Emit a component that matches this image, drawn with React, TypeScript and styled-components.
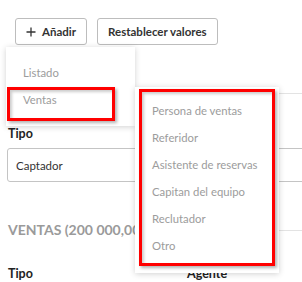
import * as React from 'react';
import styled, { createGlobalStyle } from 'styled-components';

const GlobalStyle = createGlobalStyle`
  html, body {
    margin: 0;
    padding: 0;
    background: #fff;
    font-family: Lato, "Open Sans", sans-serif;
    color: #333;
    overflow: hidden;
  }
`;

const Page = styled.div`
  position: relative;
  width: 302px;
  height: 282px;
  overflow: hidden;
  padding: 18px 0 0 7px;
  box-sizing: border-box;
`;

const Toolbar = styled.div`
  display: flex;
  gap: 10px;
  padding-left: 8px;
`;

const Button = styled.button`
  display: flex;
  align-items: center;
  gap: 6px;
  height: 27px;
  padding: 0 10px;
  background: #fff;
  border: 1px solid #bdbdbd;
  border-radius: 3px;
  font-family: Lato, sans-serif;
  font-size: 11.5px;
  font-weight: 700;
  color: #333;
`;

const Divider = styled.div<{ $top: number }>`
  margin-top: ${({ $top }) => $top}px;
  height: 1px;
  background: #e3e3e3;
`;

const Spacer = styled.div<{ $h: number }>`
  height: ${({ $h }) => $h}px;
`;

const Label = styled.div`
  font-size: 12.5px;
  line-height: 15px;
  font-weight: 700;
  color: #222;
  margin-left: 1px;
`;

const Input = styled.div`
  margin-top: 7px;
  height: 34px;
  width: 320px;
  box-sizing: border-box;
  border: 1px solid #c4c4c4;
  border-radius: 3px;
  display: flex;
  align-items: center;
  padding-left: 8px;
  font-size: 11.5px;
  color: #333;
`;

const SectionTitle = styled.div`
  display: flex;
  align-items: center;
  gap: 8px;
  margin-top: 39px;
  font-size: 14px;
  line-height: 18px;
  font-weight: 700;
  color: #9a9a9a;
  white-space: nowrap;
  margin-left: 1px;
  &::after {
    content: '';
    flex: 1;
    height: 1px;
    background: #e3e3e3;
  }
`;

const Columns = styled.div`
  display: grid;
  grid-template-columns: 179px 1fr;
  margin-top: 27px;
`;

const Menu = styled.ul<{ $left: number; $top: number; $width: number }>`
  position: absolute;
  left: ${({ $left }) => $left}px;
  top: ${({ $top }) => $top}px;
  width: ${({ $width }) => $width}px;
  margin: 0;
  list-style: none;
  background: #fff;
  box-shadow: 0 1px 6px rgba(0, 0, 0, 0.18);
  box-sizing: border-box;
`;

const MainMenu = styled(Menu)`
  padding: 12px 0 13px;
`;

const SubMenu = styled(Menu)`
  padding: 10px 0 14px;
`;

const Item = styled.li`
  height: 27px;
  line-height: 27px;
  padding-left: 17px;
  font-size: 11.3px;
  color: #9c9c9c;
  white-space: nowrap;
`;

const Highlight = styled.div<{ $left: number; $top: number; $w: number; $h: number }>`
  position: absolute;
  left: ${({ $left }) => $left}px;
  top: ${({ $top }) => $top}px;
  width: ${({ $w }) => $w}px;
  height: ${({ $h }) => $h}px;
  border: 3px solid #ff0000;
  box-sizing: border-box;
  box-shadow: 2px 2px 3px rgba(0, 0, 0, 0.3), inset 2px 2px 3px rgba(0, 0, 0, 0.2);
  pointer-events: none;
`;

const PlusIcon = () => (
  <svg width="10" height="10" viewBox="0 0 10 10">
    <path d="M5 0.5v9M0.5 5h9" stroke="#333" strokeWidth="1.3" fill="none" />
  </svg>
);

const subItems = [
  'Persona de ventas',
  'Referidor',
  'Asistente de reservas',
  'Capitan del equipo',
  'Reclutador',
  'Otro',
];

const App: React.FC = () => (
  <>
    <GlobalStyle />
    <Page>
      <Toolbar>
        <Button>
          <PlusIcon />
          Añadir
        </Button>
        <Button>Restablecer valores</Button>
      </Toolbar>
      <Divider $top={48} />
      <Spacer $h={32} />
      <Label>Tipo</Label>
      <Input>Captador</Input>
      <SectionTitle>VENTAS (200 000,00 €)</SectionTitle>
      <Columns>
        <Label>Tipo</Label>
        <Label>Agente</Label>
      </Columns>

      <MainMenu $left={6} $top={47} $width={129}>
        <Item>Listado</Item>
        <Item>Ventas</Item>
      </MainMenu>
      <SubMenu $left={135} $top={87} $width={144}>
        {subItems.map(s => (
          <Item key={s}>{s}</Item>
        ))}
      </SubMenu>
      <Highlight $left={7} $top={87} $w={108} $h={34} />
      <Highlight $left={139} $top={89} $w={136} $h={177} />
    </Page>
  </>
);

export default App;
